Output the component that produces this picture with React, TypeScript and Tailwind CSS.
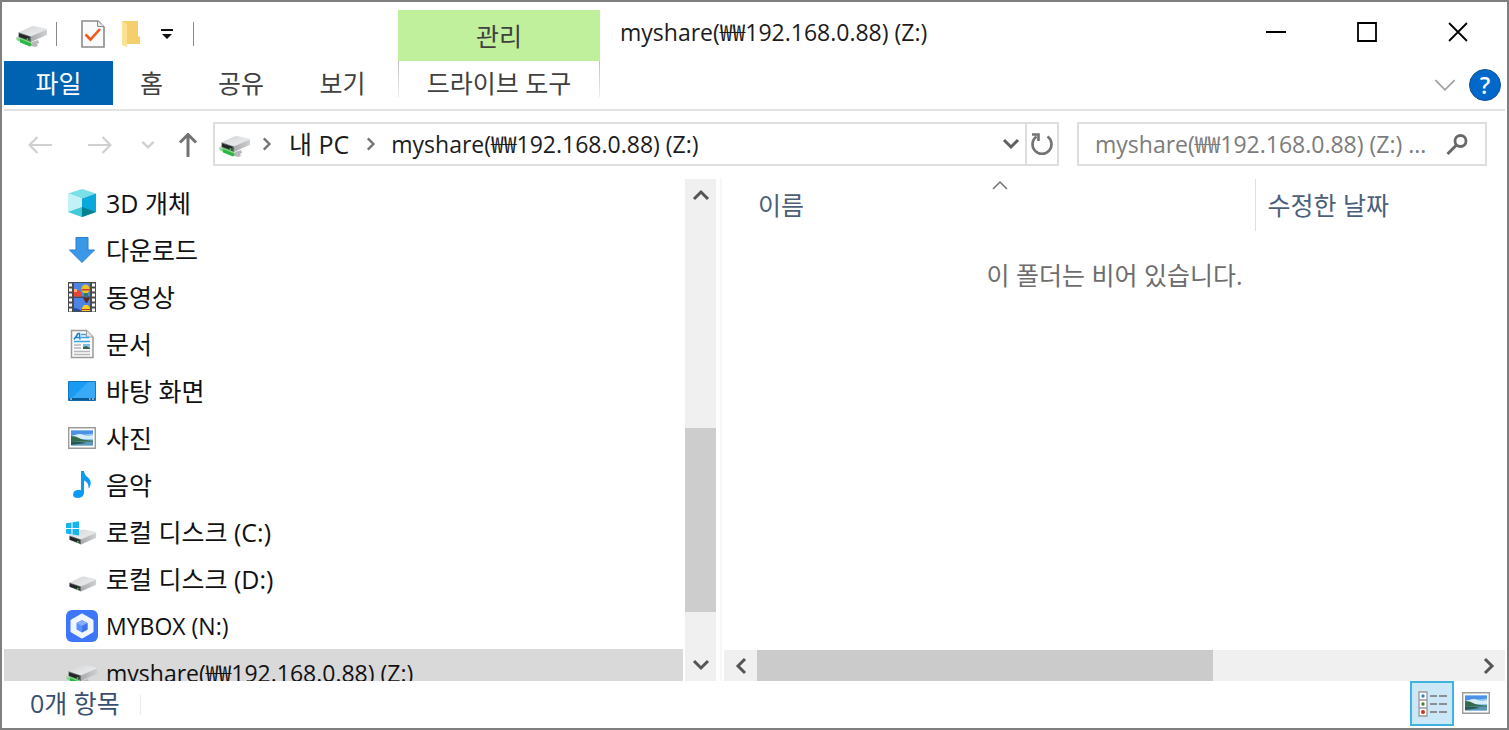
import type { ReactNode } from 'react';

interface NavItem {
  label: string;
  icon: ReactNode;
  latin?: boolean;
  selected?: boolean;
}

const DRIVE_NAME = 'myshare(₩₩192.168.0.88) (Z:)';

function DriveIcon({ network = false, windows = false }: { network?: boolean; windows?: boolean }) {
  return (
    <svg className="w-8 h-8 shrink-0" viewBox="0 0 32 32" fill="none">
      <defs>
        <linearGradient id="driveTop" x1="0" y1="0" x2="1" y2="1">
          <stop offset="0" stopColor="#d2d3d5" />
          <stop offset="0.6" stopColor="#e6e7e9" />
          <stop offset="1" stopColor="#c4c5c8" />
        </linearGradient>
        <linearGradient id="driveSide" x1="0" y1="0" x2="1" y2="0">
          <stop offset="0" stopColor="#a9abae" />
          <stop offset="1" stopColor="#cfd0d2" />
        </linearGradient>
      </defs>
      {network && (
        <>
          <path d="M0 20l3-2 13 5-2 5L1 22.500z" fill="#7ddc80" />
          <path d="M4 21l10 4 3 1-3 2.500-10-4z" fill="#2fb548" />
          <path d="M0 20l3-2 1 1-3 2.500z" fill="#c9cbcd" />
          <path d="M16 24l6-2 1 3-2 1 1 2-3 1-4-1z" fill="#b6b8ba" />
        </>
      )}
      <g transform={network ? undefined : 'translate(1 6) scale(0.94)'}>
        <path d="M2.500 14.500L15 8.500q1.500-.6 3-.5l12 2.500q1.500.5.6 1.300L15 19z" fill="url(#driveTop)" />
        <path d="M15 18.500l16-7v5.300L15 24z" fill="url(#driveSide)" />
        <path d="M2.500 14.300L15 18.500V24L2.500 19z" fill="#6b6e70" />
        <path d="M3 15.500l10.500 3.300v3.700L3 18.800z" fill="#242628" />
        <circle cx="11.500" cy="21" r="1" fill="#3fce4b" />
      </g>
      {windows && (
        <path
          d="M0 7.200l5.500-.8v5.600H0zM6.500 6.200l6.500-1v6.800H6.500zM0 13h5.500v5.400l-5.500-.8zM6.500 13H13v6.400l-6.500-.9z"
          fill="#17b4f0"
        />
      )}
    </svg>
  );
}

const CubeIcon = () => (
  <svg className="w-8 h-8 shrink-0" viewBox="0 0 32 32">
    <path d="M16 2l14 4.500-14 5-14-5z" fill="#7adfe6" />
    <path d="M2 6.500l14 5V30L2 25z" fill="#c2f1f6" />
    <path d="M16 11.500l14-5V25l-14 5z" fill="#09a9dc" />
    <path d="M2 25l14-5v10z" fill="#40c9d8" />
    <path d="M16 20l14 5-14 5z" fill="#067f91" />
  </svg>
);

const DownloadIcon = () => (
  <svg className="w-8 h-8 shrink-0" viewBox="0 0 32 32">
    <path d="M10 3.500h12v12.500h6.500L16 28.500 3.500 16H10z" fill="#3b97e8" stroke="#2a7fce" />
  </svg>
);

const VideoIcon = () => (
  <svg className="w-8 h-8 shrink-0" viewBox="0 0 32 32">
    <path d="M2 1h28v30H2z" fill="#4b4b4b" />
    <path d="M4.500 2.500v28M27.500 2.500v28" stroke="#fff" strokeWidth="3" strokeDasharray="3 2" />
    <path d="M8 2h16v13.500H8zM8 17h16v13H8z" fill="#4d82e6" />
    <path d="M8 10l4-1 3 2v4.500H8z" fill="#e94336" />
    <path d="M8 8h3v3H8z" fill="#ffab76" />
    <ellipse cx="19.500" cy="8" rx="4" ry="4.500" fill="#e9c524" />
    <path d="M16 8h7.500v1.500H16z" fill="#d73824" />
    <path d="M18 12h4v3h-4z" fill="#2c8248" />
    <path d="M17 17h7l-3 5h-1z" fill="#5b2a2e" />
    <path d="M16 27l2-3h4l2 3v3h-8z" fill="#f7cf20" />
    <path d="M15 28h9v1h-9z" fill="#c43420" />
    <path d="M8 27l4.500 1 3 2H8z" fill="#244c9d" />
  </svg>
);

const DocumentIcon = () => (
  <svg className="w-8 h-8 shrink-0" viewBox="0 0 32 32">
    <path d="M5.500 2.500h15L27 9v20.500H5.500z" fill="#fbfbfb" stroke="#9a9a9a" strokeWidth="1.500" />
    <path d="M20.500 2.500V9H27" fill="#e6e6e6" stroke="#9a9a9a" />
    <path d="M8 11.500l4-6h1.500l.5 6M9.500 9.500H13" stroke="#1681cf" strokeWidth="1.500" fill="none" />
    <path d="M15 6.500h5M15 9.500h8M8 13.500h16" stroke="#37a3e5" strokeWidth="1.600" />
    <path d="M8 17h7M8 20h7M8 23.500h16M8 26.500h16" stroke="#b4b7ba" strokeWidth="1.500" />
    <path d="M17 16h7v5h-7z" fill="#7fbdec" />
    <path d="M17 19l3-1 4 2v1h-7z" fill="#34664c" />
  </svg>
);

const DesktopIcon = () => (
  <svg className="w-8 h-8 shrink-0" viewBox="0 0 32 32">
    <path d="M2.500 6.500h27v19h-27z" fill="#189bf3" stroke="#1578bb" />
    <path d="M22 7h7v16H6z" fill="#38aaf8" />
    <path d="M3 23h26v2.500H3z" fill="#0c5a94" />
    <path d="M4 24h2M23 24h1.500M26 24h2" stroke="#fff" />
  </svg>
);

const PictureIcon = () => (
  <svg className="w-8 h-8 shrink-0" viewBox="0 0 32 32">
    <path d="M2.700 5.700h26.600v20.600H2.700z" fill="#fff" stroke="#9b9b9b" strokeWidth="1.400" />
    <path d="M5 8.500h22v15H5z" fill="#8fc6f4" />
    <path d="M5 8.500h22v3L5 14z" fill="#4b91e6" />
    <path d="M9 13q5-2 9 0t9 0v4H5v-3z" fill="#d7edf8" />
    <path d="M5 14q5 0 8 2t14 2.500v1.500H5z" fill="#356b4b" />
    <path d="M5 19.500h22v4H5z" fill="#5b97b9" />
    <path d="M5 19.500q9 0 15 1.500l-15 2z" fill="#28594f" />
  </svg>
);

const MusicIcon = () => (
  <svg className="w-8 h-8 shrink-0" viewBox="0 0 32 32">
    <path
      d="M15 2h3q.5 4 4 6.500 4.500 4 1.500 10l-1 1q.5-6-4.500-8v12q-.3 5-6 5.500-5 0-5-3.500.5-4.500 5.500-4.800 1.500 0 2.500.6z"
      fill="#0b9bf5"
    />
  </svg>
);

const MyboxIcon = () => (
  <svg className="w-8 h-8 shrink-0" viewBox="0 0 32 32">
    <rect width="32" height="32" rx="6" fill="#3d76fb" />
    <path d="M16 5l10 5.700v10.600L16 27l-10-5.700V10.700z" fill="#f0f6ff" stroke="#f0f6ff" strokeWidth="3" strokeLinejoin="round" />
    <path d="M16 10l5.500 3v6.500L16 22.500l-5.500-3V13z" fill="#5a90fb" />
    <path d="M16 10l5.500 3L16 16l-5.500-3z" fill="#86aefc" />
    <path d="M16 16l5.500-3v6.500L16 22.500z" fill="#3d73ee" />
  </svg>
);

const TaskIcon = () => (
  <svg className="w-6 h-7" viewBox="0 0 24 28" fill="none">
    <path d="M1 1h16l6 6v20H1z" fill="#fafafa" stroke="#8b8b8b" strokeWidth="1.600" />
    <path d="M16.500 1v5.500H23" fill="#e8e8e8" stroke="#8b8b8b" />
    <path d="M4.500 14.500l5 5L19 9" stroke="#f2571b" strokeWidth="2.600" />
  </svg>
);

const FolderIcon = () => (
  <svg className="w-5 h-7" viewBox="0 0 20 28">
    <path d="M1 1h16v15l2 1v7H4z" fill="#f5cf6d" />
    <path d="M1 1l5 3v23l-5-2z" fill="#fde193" />
  </svg>
);

function Chevron({ className, path, width = 2 }: { className: string; path: string; width?: number }) {
  return (
    <svg className={className} viewBox="0 0 20 20" fill="none" stroke="currentColor" strokeWidth={width}>
      <path d={path} />
    </svg>
  );
}

const UP = 'M3 14l7-7 7 7';
const DOWN = 'M3 6l7 7 7-7';
const LEFT = 'M14 3l-7 7 7 7';
const RIGHT = 'M6 3l7 7-7 7';

function ArrowIcon({ rotate = '', width = 2.2 }: { rotate?: string; width?: number }) {
  return (
    <svg className={`w-6 h-6 ${rotate}`} viewBox="0 0 24 24" fill="none" stroke="currentColor" strokeWidth={width}>
      <path d="M24 12H2M9.500 4l-8 8 8 8" />
    </svg>
  );
}

const navItems: NavItem[] = [
  { label: '3D 개체', icon: <CubeIcon /> },
  { label: '다운로드', icon: <DownloadIcon /> },
  { label: '동영상', icon: <VideoIcon /> },
  { label: '문서', icon: <DocumentIcon /> },
  { label: '바탕 화면', icon: <DesktopIcon /> },
  { label: '사진', icon: <PictureIcon /> },
  { label: '음악', icon: <MusicIcon /> },
  { label: '로컬 디스크 (C:)', icon: <DriveIcon windows /> },
  { label: '로컬 디스크 (D:)', icon: <DriveIcon /> },
  { label: 'MYBOX (N:)', icon: <MyboxIcon />, latin: true },
  { label: DRIVE_NAME, icon: <DriveIcon network />, latin: true, selected: true },
];

function TitleBar() {
  return (
    <header className="flex h-[59px] shrink-0">
      <div className="flex w-[394px] shrink-0 items-center pl-3 pb-1 pt-2">
        <DriveIcon network />
        <span className="ml-2 h-6 w-px bg-[#8a8a8a]" />
        <button type="button" aria-label="속성" className="ml-6">
          <TaskIcon />
        </button>
        <button type="button" aria-label="새 폴더" className="ml-4">
          <FolderIcon />
        </button>
        <button type="button" aria-label="빠른 실행" className="ml-5">
          <svg className="w-3 h-3" viewBox="0 0 12 12">
            <path d="M0 1h12v2H0zM1 6h10L6 11z" fill="#111" />
          </svg>
        </button>
        <span className="ml-5 h-6 w-px bg-[#8a8a8a]" />
      </div>
      <div className="mt-2 flex w-[202px] shrink-0 items-center justify-center bg-[#c1f09c] text-[#404040]">관리</div>
      <h1 className="min-w-0 flex-1 truncate pl-5 pt-3.5 text-[23px] text-[#1c1c1c]">
        {DRIVE_NAME}
      </h1>
      <div className="flex items-center pr-0.5 text-black">
        <button type="button" aria-label="최소화" className="flex w-[91px] justify-center">
          <svg className="w-5 h-5" viewBox="0 0 20 20" stroke="currentColor" strokeWidth="2">
            <path d="M0 10h20" />
          </svg>
        </button>
        <button type="button" aria-label="최대화" className="flex w-[91px] justify-center">
          <svg className="w-5 h-5" viewBox="0 0 20 20" stroke="currentColor" strokeWidth="1.800" fill="none">
            <path d="M1 1h18v18H1z" />
          </svg>
        </button>
        <button type="button" aria-label="닫기" className="flex w-[91px] justify-center">
          <svg className="w-5 h-5" viewBox="0 0 20 20" stroke="currentColor" strokeWidth="1.800">
            <path d="M1 1l18 18M19 1L1 19" />
          </svg>
        </button>
      </div>
    </header>
  );
}

function RibbonTabs() {
  return (
    <nav className="flex h-[50px] shrink-0 border-b-2 border-[#e2e2e2] text-[#404040]">
      <div className="flex h-11 w-[394px] shrink-0">
        <button type="button" className="w-[109px] bg-[#0063b1] text-white">파일</button>
        <button type="button" className="w-[77px]">홈</button>
        <button type="button" className="w-[102px]">공유</button>
        <button type="button" className="w-[101px]">보기</button>
      </div>
      <div className="flex h-11 w-[202px] shrink-0">
        <span className="h-9 w-px bg-linear-to-b from-[#c0c0c0] to-[#ececec]" />
        <button type="button" className="flex-1">드라이브 도구</button>
        <span className="h-9 w-px bg-linear-to-b from-[#c0c0c0] to-[#ececec]" />
      </div>
      <div className="flex h-12 flex-1 items-center justify-end gap-3 pr-1">
        <button type="button" aria-label="리본 확장" className="text-[#a0a0a0]">
          <Chevron className="w-6 h-6" path="M2 6l8 8 8-8" width={1.5} />
        </button>
        <button
          type="button"
          aria-label="도움말"
          className="flex h-8 w-8 items-center justify-center rounded-full border border-[#17548f] bg-[#0067cb] text-[23px] font-semibold leading-none text-white"
        >
          ?
        </button>
      </div>
    </nav>
  );
}

function AddressBar() {
  return (
    <div className="flex h-[68px] shrink-0 items-center pb-0.5 pr-[18px] text-[#1c1c1c]">
      <div className="flex w-[209px] shrink-0 items-center pt-0.5 text-[#d0d0d0]">
        <button type="button" aria-label="뒤로" className="ml-6">
          <ArrowIcon />
        </button>
        <button type="button" aria-label="앞으로" className="ml-9">
          <ArrowIcon rotate="rotate-180" />
        </button>
        <button type="button" aria-label="최근 위치" className="ml-7">
          <Chevron className="w-4 h-4" path={DOWN} width={3} />
        </button>
        <button type="button" aria-label="위로" className="ml-5 text-[#737373]">
          <ArrowIcon rotate="rotate-90" width={3} />
        </button>
      </div>
      <div className="flex h-11 min-w-0 flex-1 items-center border-2 border-[#dedede]">
        <span className="ml-1">
          <DriveIcon network />
        </span>
        <Chevron className="ml-2 h-4 w-4 shrink-0 text-[#737373]" path={RIGHT} width={3} />
        <button type="button" className="ml-3.5 shrink-0">내 PC</button>
        <Chevron className="ml-3.5 h-4 w-4 shrink-0 text-[#737373]" path={RIGHT} width={3} />
        <button type="button" className="ml-3 min-w-0 truncate text-[23px]">{DRIVE_NAME}</button>
        <button type="button" aria-label="이전 위치" className="ml-auto mr-1 text-[#606060]">
          <Chevron className="w-5 h-5" path={DOWN} width={3} />
        </button>
        <button
          type="button"
          aria-label="새로 고침"
          className="flex h-full w-8 items-center justify-center border-l-2 border-[#dedede] text-[#737373]"
        >
          <svg className="w-6 h-6" viewBox="0 0 24 24" fill="none" stroke="currentColor" strokeWidth="2.600">
            <path d="M17.500 4.500a9.500 9.500 0 1 1-11 0M2 2.500h6.500v6.500" />
          </svg>
        </button>
      </div>
      <label className="ml-[18px] flex h-11 w-[410px] items-center border-2 border-[#dedede] px-4">
        <input
          type="text"
          aria-label="검색"
          placeholder={`${DRIVE_NAME} ...`}
          className="min-w-0 flex-1 text-[23px] outline-none placeholder:text-[#7c7c7c] placeholder:opacity-100"
        />
        <svg className="w-6 h-6 shrink-0 text-[#686868]" viewBox="0 0 24 24" fill="none" stroke="currentColor">
          <circle cx="15.500" cy="9" r="5.500" strokeWidth="2.800" />
          <path d="M11.500 13L2.500 22" strokeWidth="3" />
        </svg>
      </label>
    </div>
  );
}

function Sidebar() {
  return (
    <aside className="flex w-[718px] shrink-0 border-r-2 border-[#f7f7f7]">
      <ul className="min-w-0 flex-1 overflow-hidden">
        {navItems.map((item) => (
          <li key={item.label}>
            <button
              type="button"
              className={`flex h-[47px] w-full items-center gap-2 pl-[62px] text-left text-[#111] ${item.selected ? 'bg-[#d9d9d9]' : ''}`}
            >
              {item.icon}
              <span className={item.latin ? 'text-[23px]' : ''}>{item.label}</span>
            </button>
          </li>
        ))}
      </ul>
      <div className="ml-0.5 mr-1 flex w-[31px] flex-col items-center bg-[#f0f0f0] text-[#555]">
        <button type="button" aria-label="위로 스크롤" className="flex h-8 items-center">
          <Chevron className="w-5 h-5" path={UP} width={3} />
        </button>
        <div className="flex w-full flex-1 flex-col">
          <div className="flex-[216]" />
          <div className="flex-[184] bg-[#cdcdcd]" />
          <div className="flex-[37]" />
        </div>
        <button type="button" aria-label="아래로 스크롤" className="flex h-8 items-center">
          <Chevron className="w-5 h-5" path={DOWN} width={3} />
        </button>
      </div>
    </aside>
  );
}

function FileList() {
  return (
    <main className="flex min-w-0 flex-1 flex-col pl-0.5">
      <table className="w-full table-fixed text-[#4c607a]">
        <thead>
          <tr className="h-[52px]">
            <th className="relative w-[531px] border-r border-[#e0e0e0] pl-[34px] text-left font-normal">
              <Chevron className="absolute top-[-4px] left-[266px] h-5 w-5 text-[#737373]" path={UP} width={1.5} />
              이름
            </th>
            <th className="pl-3 text-left font-normal">수정한 날짜</th>
          </tr>
        </thead>
        <tbody>
          <tr className="h-[88px]">
            <td colSpan={2} className="text-center text-[#6d6d6d]">이 폴더는 비어 있습니다.</td>
          </tr>
        </tbody>
      </table>
      <div className="mt-auto flex h-[31px] items-center bg-[#f0f0f0] text-[#555]">
        <button type="button" aria-label="왼쪽으로 스크롤" className="flex w-[33px] justify-center">
          <Chevron className="w-5 h-5" path={LEFT} width={3} />
        </button>
        <div className="flex h-full flex-1">
          <div className="flex-[456] bg-[#cbcbcb]" />
          <div className="flex-[259]" />
        </div>
        <button type="button" aria-label="오른쪽으로 스크롤" className="flex w-[33px] justify-center">
          <Chevron className="w-5 h-5" path={RIGHT} width={3} />
        </button>
      </div>
    </main>
  );
}

function StatusBar() {
  return (
    <footer className="flex h-[47px] shrink-0 items-center pr-[13px] text-[#3a4f70]">
      <span className="ml-[26px] pb-1">0개 항목</span>
      <span className="ml-5 h-5 w-px bg-[#ececec]" />
      <button
        type="button"
        aria-label="자세히"
        className="mb-0.5 ml-auto flex h-[45px] w-11 items-center justify-center border-2 border-[#3fb2e0] bg-[#cce8f6]"
      >
        <svg className="ml-0.5 h-7 w-8" viewBox="0 0 32 28" fill="none">
          <path d="M2 2h8v8H2zM2 10h8v8H2zM2 18h8v8H2z" fill="#fff" stroke="#999" strokeWidth="1.300" />
          <path d="M13 6h7M22 6h8M13 14h7M22 14h8M13 22h7M22 22h8" stroke="#8a8f94" strokeWidth="2" />
          <circle cx="6" cy="6" r="1.700" fill="#2f86c5" />
          <circle cx="6" cy="14" r="1.700" fill="#4f7b35" />
          <circle cx="6" cy="22" r="2" fill="#d0321e" />
        </svg>
      </button>
      <button type="button" aria-label="큰 아이콘" className="ml-[6px] pb-1">
        <PictureIcon />
      </button>
    </footer>
  );
}

export default function App() {
  return (
    <div className="flex h-screen flex-col overflow-hidden border-2 border-[#7f7f7f] bg-white px-0.5 font-['Open_Sans','Noto_Sans_CJK_KR',sans-serif] text-[25px] leading-8">
      <TitleBar />
      <RibbonTabs />
      <AddressBar />
      <div className="flex min-h-0 flex-1">
        <Sidebar />
        <FileList />
      </div>
      <StatusBar />
    </div>
  );
}
